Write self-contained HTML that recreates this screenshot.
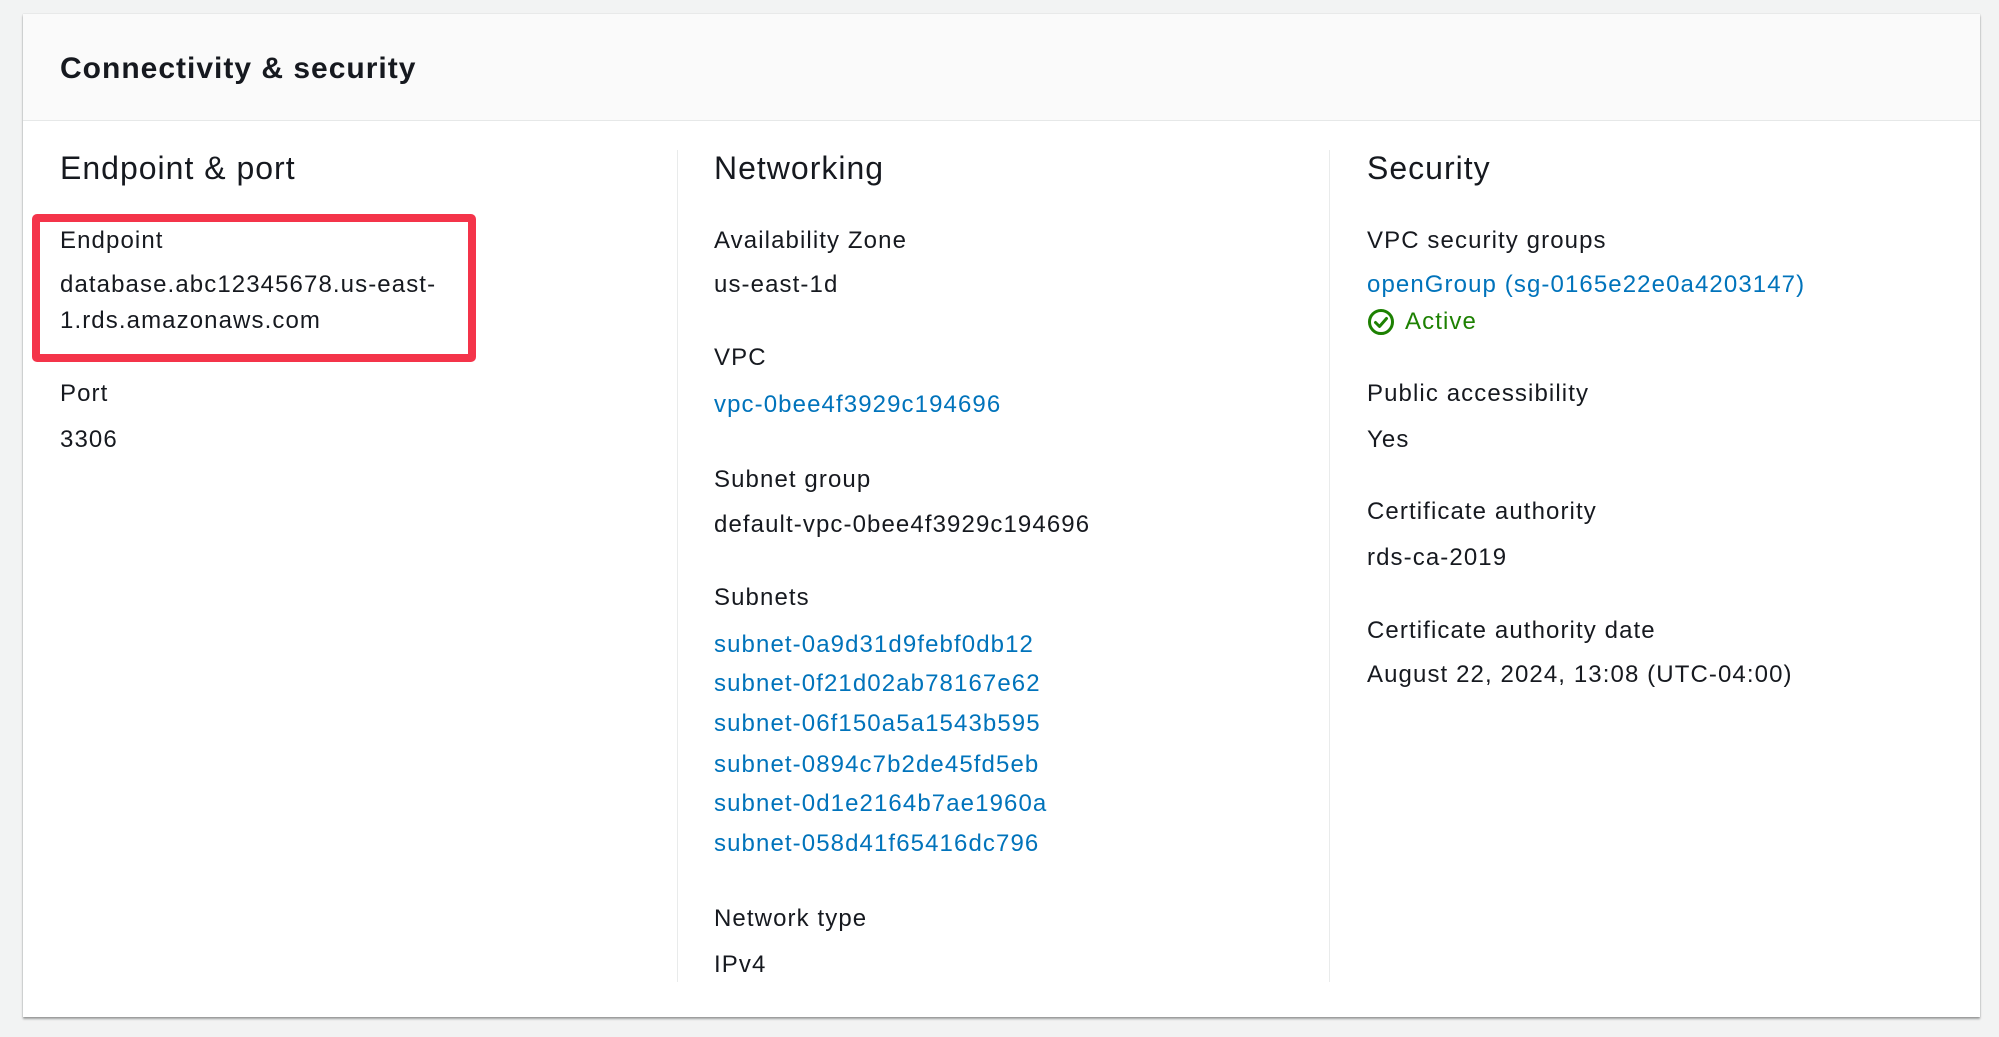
<!DOCTYPE html>
<html><head><meta charset="utf-8"><style>
body{margin:0;width:1999px;height:1037px;background:#f2f3f3;font-family:"Liberation Sans",Arial,sans-serif;color:#16191f;position:relative;overflow:hidden}
.card{position:absolute;left:23px;top:14px;width:1957px;height:1003px;background:#fff;box-shadow:0 2px 2px rgba(0,0,0,.35),0 0 1px rgba(0,0,0,.2)}
.hdr{position:absolute;left:23px;top:14px;width:1957px;height:106px;background:#fafafa;border-bottom:1px solid #e6e8e8}
.t{position:absolute;font-size:24px;line-height:30px;letter-spacing:1.1px;white-space:nowrap}
.h{position:absolute;font-size:32px;line-height:36px;letter-spacing:1px;top:150px;white-space:nowrap}
.a{color:#0073bb}
.div{position:absolute;top:150px;width:1px;height:832px;background:#e9ebeb}
.box{position:absolute;left:32px;top:214px;width:428px;height:132px;border:8px solid #f4344a;border-radius:5px}
</style></head><body>
<div class="card"></div>
<div class="hdr"></div>
<div class="t" style="left:60px;top:51px;font-size:30px;line-height:36px;font-weight:bold;letter-spacing:1px">Connectivity &amp; security</div>
<div class="div" style="left:677px"></div>
<div class="div" style="left:1329px"></div>
<div class="box"></div>

<div class="h" style="left:60px">Endpoint &amp; port</div>
<div class="t" style="left:60px;top:226px">Endpoint</div>
<div class="t" style="left:60px;top:270px">database.abc12345678.us-east-</div>
<div class="t" style="left:60px;top:306px">1.rds.amazonaws.com</div>
<div class="t" style="left:60px;top:379px">Port</div>
<div class="t" style="left:60px;top:425px">3306</div>

<div class="h" style="left:714px">Networking</div>
<div class="t" style="left:714px;top:226px">Availability Zone</div>
<div class="t" style="left:714px;top:270px">us-east-1d</div>
<div class="t" style="left:714px;top:343px">VPC</div>
<div class="t a" style="left:714px;top:390px">vpc-0bee4f3929c194696</div>
<div class="t" style="left:714px;top:465px">Subnet group</div>
<div class="t" style="left:714px;top:510px">default-vpc-0bee4f3929c194696</div>
<div class="t" style="left:714px;top:583px">Subnets</div>
<div class="t a" style="left:714px;top:630px">subnet-0a9d31d9febf0db12</div>
<div class="t a" style="left:714px;top:669px">subnet-0f21d02ab78167e62</div>
<div class="t a" style="left:714px;top:709px">subnet-06f150a5a1543b595</div>
<div class="t a" style="left:714px;top:750px">subnet-0894c7b2de45fd5eb</div>
<div class="t a" style="left:714px;top:789px">subnet-0d1e2164b7ae1960a</div>
<div class="t a" style="left:714px;top:829px">subnet-058d41f65416dc796</div>
<div class="t" style="left:714px;top:904px">Network type</div>
<div class="t" style="left:714px;top:950px">IPv4</div>

<div class="h" style="left:1367px">Security</div>
<div class="t" style="left:1367px;top:226px">VPC security groups</div>
<div class="t a" style="left:1367px;top:270px">openGroup (sg-0165e22e0a4203147)</div>
<svg style="position:absolute;left:1367px;top:308px" width="28" height="28" viewBox="0 0 28 28"><circle cx="14" cy="14" r="11.5" fill="none" stroke="#1d8102" stroke-width="3"/><path d="M8.5 14.5l4 4 7-8" fill="none" stroke="#1d8102" stroke-width="3" stroke-linecap="round" stroke-linejoin="round"/></svg>
<div class="t" style="left:1405px;top:307px;color:#1d8102">Active</div>
<div class="t" style="left:1367px;top:379px">Public accessibility</div>
<div class="t" style="left:1367px;top:425px">Yes</div>
<div class="t" style="left:1367px;top:497px">Certificate authority</div>
<div class="t" style="left:1367px;top:543px">rds-ca-2019</div>
<div class="t" style="left:1367px;top:616px">Certificate authority date</div>
<div class="t" style="left:1367px;top:660px">August 22, 2024, 13:08 (UTC-04:00)</div>
</body></html>
